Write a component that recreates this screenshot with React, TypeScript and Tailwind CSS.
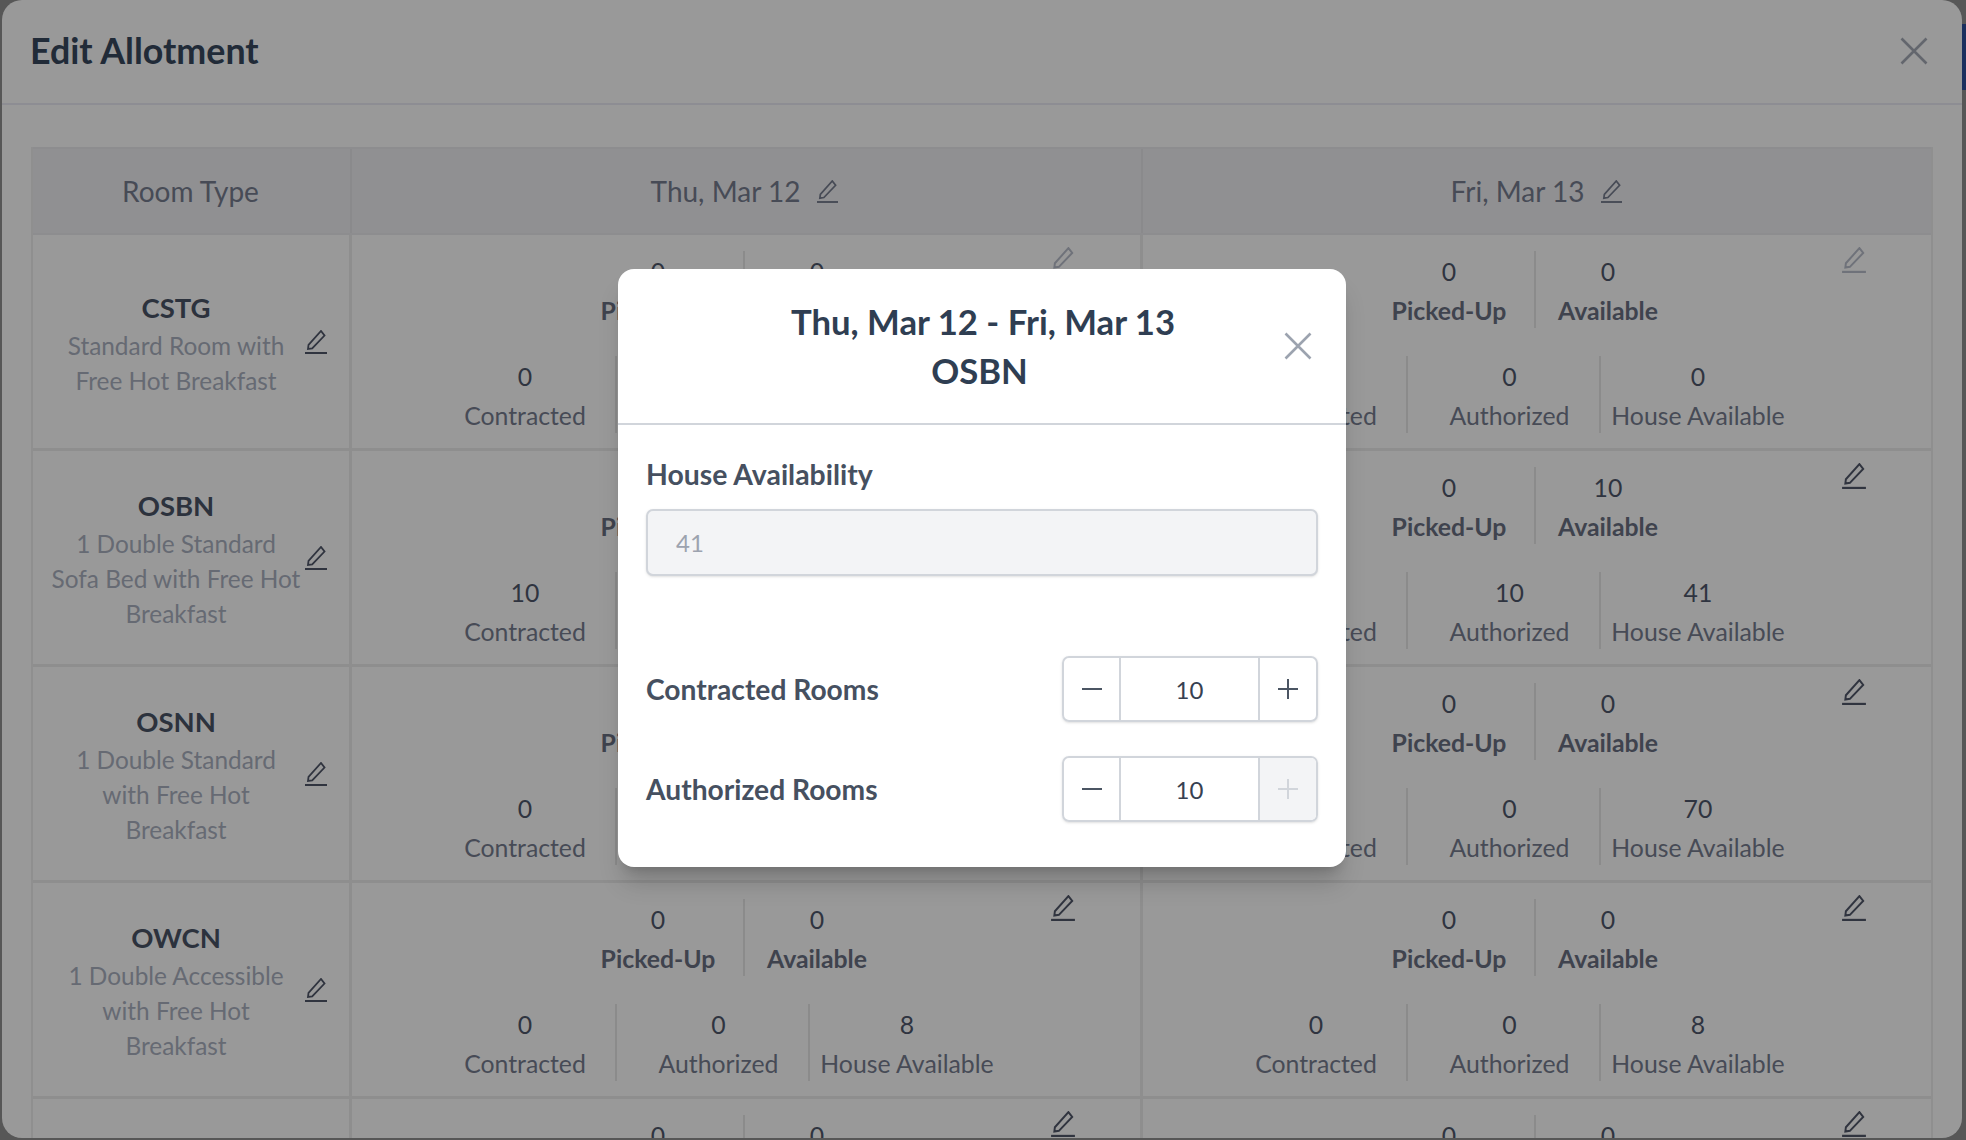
const font = { fontFamily: '"Lato", "Open Sans", sans-serif' };

function PencilLine({ className }: { className: string }) {
  return (
    <svg viewBox="1 2 22 24" fill="none" stroke="currentColor" strokeWidth="2" strokeLinecap="square" strokeLinejoin="miter" className={className}>
      <path d="M4.5 17 L4 21 L8.2 20.3 L20.5 7.5 L17 3 Z" strokeWidth="1.8" />
      <path d="M1 25 H23" strokeWidth="2" strokeLinecap="butt" />
    </svg>
  );
}

function Cross({ className }: { className: string }) {
  return (
    <svg viewBox="0 0 28 28" fill="none" stroke="currentColor" strokeWidth="2.6" className={className}>
      <path d="M1.5 1.5 L26.5 26.5 M26.5 1.5 L1.5 26.5" />
    </svg>
  );
}

type Vals = [string, string, string, string, string];

const rows: { code: string; desc: string; a: Vals; b: Vals; faint?: boolean }[] = [
  { code: 'CSTG', desc: 'Standard Room with Free Hot Breakfast', a: ['0', '0', '0', '0', '0'], b: ['0', '0', '0', '0', '0'], faint: true },
  { code: 'OSBN', desc: '1 Double Standard Sofa Bed with Free Hot Breakfast', a: ['0', '10', '10', '10', '41'], b: ['0', '10', '10', '10', '41'] },
  { code: 'OSNN', desc: '1 Double Standard with Free Hot Breakfast', a: ['0', '0', '0', '0', '70'], b: ['0', '0', '0', '0', '70'] },
  { code: 'OWCN', desc: '1 Double Accessible with Free Hot Breakfast', a: ['0', '0', '0', '0', '8'], b: ['0', '0', '0', '0', '8'] },
  { code: '', desc: '', a: ['0', '0', '0', '0', '0'], b: ['0', '0', '0', '0', '0'] },
];

function Stat({ value, label, bold, className }: { value: string; label: string; bold?: boolean; className: string }) {
  return (
    <div className={`h-[77px] text-center text-[24.8px] leading-[39px] ${className}`}>
      <div className="pt-[1px] text-[#2f3440]">{value}</div>
      <div className={bold ? 'font-bold text-[#3f434e]' : 'text-[#474b56]'}>{label}</div>
    </div>
  );
}

function DayCell({ v, faint, last }: { v: Vals; faint?: boolean; last?: boolean }) {
  return (
    <div className={`relative h-full pt-[16px] ${last ? '' : 'border-r-[3px] border-[#8e8e8e]'}`}>
      <div className="ml-[221px] flex">
        <Stat value={v[0]} label="Picked-Up" bold className="w-[172px] border-r-2 border-[#8b8b8b]" />
        <Stat value={v[1]} label="Available" bold className="w-[144px]" />
      </div>
      <div className="ml-[83px] mt-[28px] flex">
        <Stat value={v[2]} label="Contracted" className="w-[182px] border-r-2 border-[#8b8b8b]" />
        <Stat value={v[3]} label="Authorized" className="w-[193px] pl-[12px] border-r-2 border-[#8b8b8b]" />
        <Stat value={v[4]} label="House Available" className="w-[194px]" />
      </div>
      <PencilLine className={`absolute left-[699px] top-[12px] h-[26px] w-[24px] ${faint ? 'text-[#6f727a]' : 'text-[#30343f]'}`} />
    </div>
  );
}

function Stepper({ disabledPlus }: { disabledPlus?: boolean }) {
  return (
    <div className="flex h-[66px] w-[256px] overflow-hidden rounded-[7px] border-2 border-[#d1d5db] shadow-sm">
      <div className="flex w-[57px] items-center justify-center border-r-2 border-[#d1d5db] text-[#4b5563]">
        <svg viewBox="0 0 20 20" className="h-5 w-5" stroke="currentColor" strokeWidth="2"><path d="M0 10 H20" /></svg>
      </div>
      <div className="flex flex-1 items-center justify-center text-[24px] text-[#374151] pt-[2px]">10</div>
      <div className={`flex w-[58px] items-center justify-center border-l-2 border-[#d1d5db] ${disabledPlus ? 'bg-[#f3f4f6] text-[#d1d5db]' : 'text-[#4b5563]'}`}>
        <svg viewBox="0 0 20 20" className="h-5 w-5" stroke="currentColor" strokeWidth="2"><path d="M0 10 H20 M10 0 V20" /></svg>
      </div>
    </div>
  );
}

export default function App() {
  return (
    <div className="relative flex h-[1140px] w-[1966px] overflow-hidden bg-[#575757]" style={font}>
      <div className="ml-[2px] h-[1138px] w-[1960px] overflow-hidden rounded-[20px] bg-[#999999]">
        <header className="flex h-[105px] items-center justify-between border-b-2 border-[#8d8d93] pb-[2px] pl-[28px] pr-[34px]">
          <h1 className="text-[35.8px] font-bold leading-none text-[#212b38]">Edit Allotment</h1>
          <Cross className="h-[28px] w-[28px] text-[#63666d]" />
        </header>
        <div className="ml-[29px] mt-[42px] w-[1902px] border-x-2 border-[#8f8f8f]">
          <div className="grid h-[88px] grid-cols-[319px_791px_1fr] border-y-2 border-[#8d8d8f] bg-[#909092] text-[28px] text-[#474b56]">
            <div className="flex items-center justify-center border-r-2 border-[#8a8a8c] pr-[2px]">Room Type</div>
            <div className="flex items-center justify-center gap-[17px] border-r-2 border-[#8a8a8c] pr-[4px]">
              Thu, Mar 12 <PencilLine className="h-[23px] w-[21px] text-[#474b56]" />
            </div>
            <div className="flex items-center justify-center gap-[17px] pr-[1px]">
              Fri, Mar 13 <PencilLine className="h-[23px] w-[21px] text-[#474b56]" />
            </div>
          </div>
          {rows.map((r, i) => (
            <div key={i} className="grid h-[216px] grid-cols-[319px_791px_1fr] border-b-[3px] border-[#8e8e8e]">
              <div className="flex items-center border-r-[3px] border-[#8e8e8e] pl-[17px]">
                <div className="w-[252px] text-center">
                  <div className="pt-[2px] text-[27.5px] font-bold leading-[40px] text-[#2c323d]">{r.code}</div>
                  <div className="text-[24.4px] leading-[35px] text-[#666a73]">{r.desc}</div>
                </div>
                {r.code && <PencilLine className="ml-[3px] h-[24px] w-[22px] text-[#30343f]" />}
              </div>
              <DayCell v={r.a} faint={r.faint} />
              <DayCell v={r.b} faint={r.faint} last />
            </div>
          ))}
        </div>
      </div>
      <div className="mt-[24px] h-[66px] w-[4px] bg-[#1b2f5e]" />

      <div className="absolute left-[618px] top-[269px] h-[598px] w-[728px] rounded-[16px] bg-white shadow-[0_20px_25px_-5px_rgba(0,0,0,0.18),0_8px_10px_-6px_rgba(0,0,0,0.15)]">
        <div className="relative h-[156px] border-b-2 border-[#d1d5db] pt-[28px] text-center">
          <div className="text-[34.7px] font-bold leading-[49px] text-[#2f3e52]">
            <div className="pl-[2px]">Thu, Mar 12 - Fri, Mar 13</div>
            <div className="pr-[5px]">OSBN</div>
          </div>
          <Cross className="absolute right-[34px] top-[63px] h-[28px] w-[28px] text-[#9ca3af]" />
        </div>
        <div className="px-[28px] pt-[32px]">
          <div className="text-[28.4px] font-bold leading-[34px] text-[#465060]">House Availability</div>
          <div className="mt-[18px] flex h-[67px] items-center rounded-[7px] border-2 border-[#d1d5db] bg-[#f3f4f6] pl-[28px] text-[24px] text-[#9ca3af] shadow-sm">41</div>
          <div className="mt-[80px] flex items-center justify-between">
            <span className="text-[28.2px] font-bold text-[#465060]">Contracted Rooms</span>
            <Stepper />
          </div>
          <div className="mt-[34px] flex items-center justify-between">
            <span className="text-[28.2px] font-bold text-[#465060]">Authorized Rooms</span>
            <Stepper disabledPlus />
          </div>
        </div>
      </div>
    </div>
  );
}
